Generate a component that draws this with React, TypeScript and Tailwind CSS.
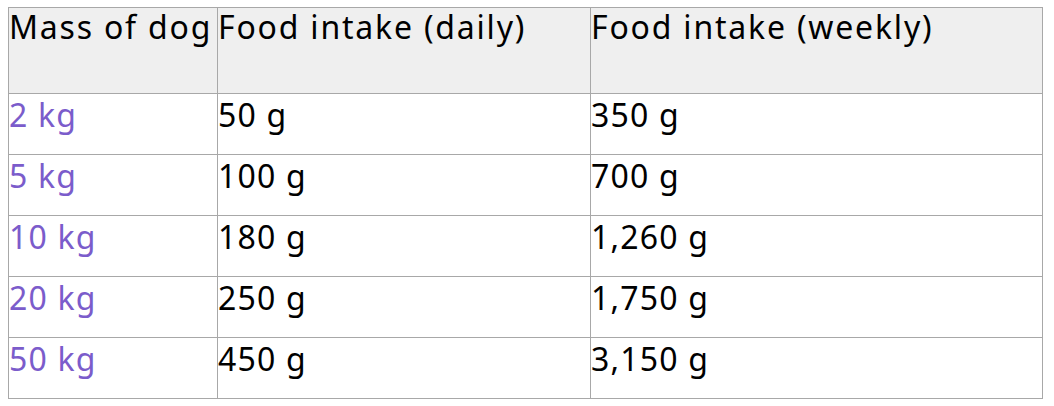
const rows = [
  ['2 kg', '50 g', '350 g'],
  ['5 kg', '100 g', '700 g'],
  ['10 kg', '180 g', '1,260 g'],
  ['20 kg', '250 g', '1,750 g'],
  ['50 kg', '450 g', '3,150 g'],
]

export default function App() {
  return (
    <div className="w-[1054px] h-[406px] bg-white pt-[7px] pl-[8px] font-['Noto_Sans',sans-serif] text-[32px] text-black">
      <table className="border-collapse table-fixed">
        <colgroup>
          <col className="w-[209px]" />
          <col className="w-[373px]" />
          <col className="w-[452px]" />
        </colgroup>
        <thead>
          <tr className="bg-[#efefef] h-[86px] tracking-[1.8px]">
            <th className="border border-[#a8a8a8] align-top text-left font-normal pl-0 pt-0 leading-[38px] whitespace-nowrap">Mass of dog</th>
            <th className="border border-[#a8a8a8] align-top text-left font-normal pl-0 pt-0 leading-[38px]">Food intake (daily)</th>
            <th className="border border-[#a8a8a8] align-top text-left font-normal pl-0 pt-0 leading-[38px]">Food intake (weekly)</th>
          </tr>
        </thead>
        <tbody>
          {rows.map(r => (
            <tr key={r[0]} className="h-[61px] tracking-[1.2px]">
              <td className="border border-[#a8a8a8] align-top pl-0 pt-[1px] leading-[40px] text-[#7b5ccb]">{r[0]}</td>
              <td className="border border-[#a8a8a8] align-top pl-0 pt-[1px] leading-[40px]">{r[1]}</td>
              <td className="border border-[#a8a8a8] align-top pl-0 pt-[1px] leading-[40px]">{r[2]}</td>
            </tr>
          ))}
        </tbody>
      </table>
    </div>
  )
}
